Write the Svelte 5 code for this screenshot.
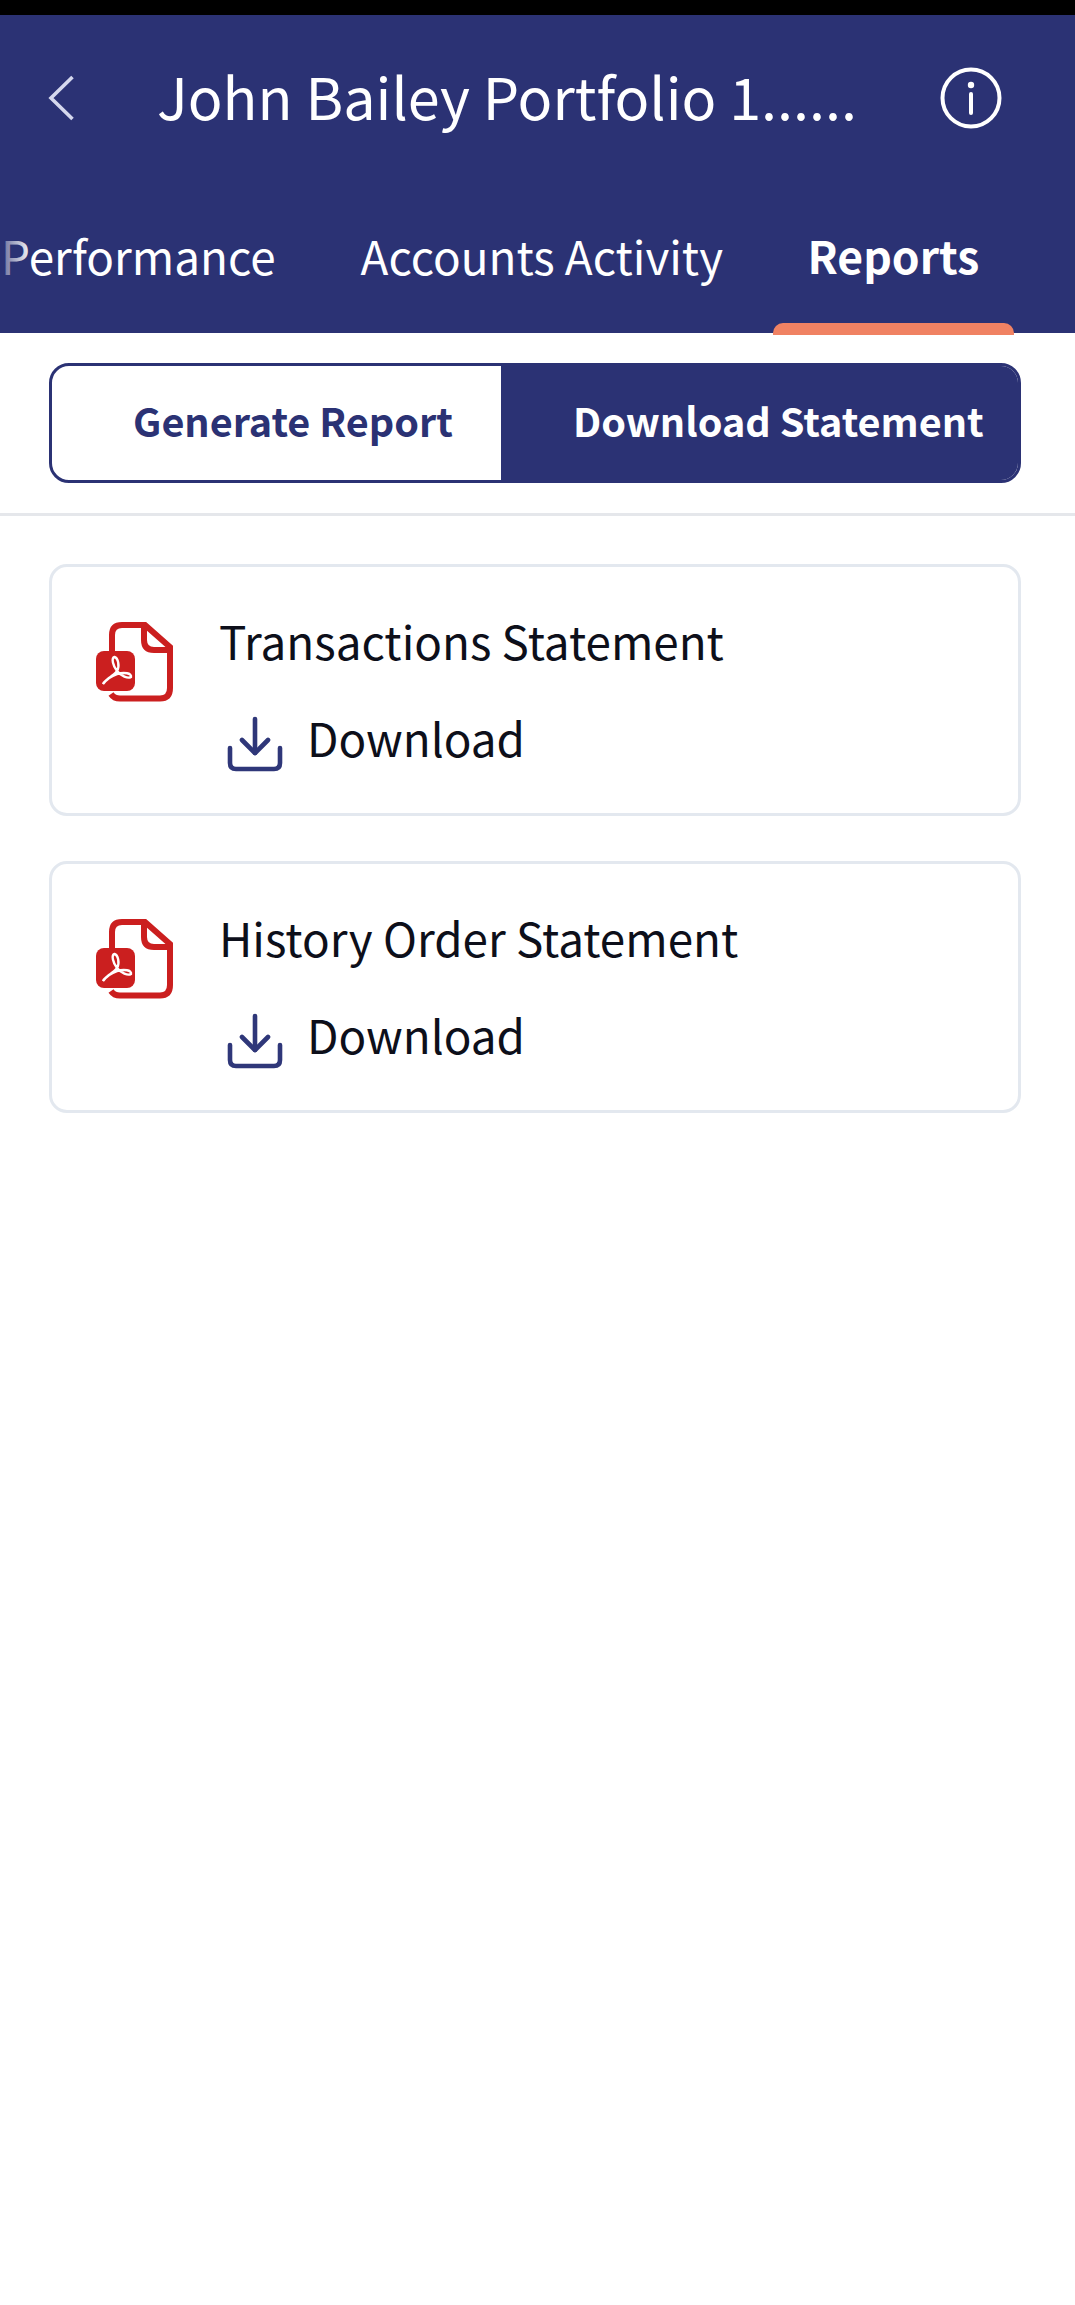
<script>
  const tabs = [
    { label: 'Performance', active: false },
    { label: 'Accounts Activity', active: false },
    { label: 'Reports', active: true },
  ];
  const statements = ['Transactions Statement', 'History Order Statement'];
</script>

<div class="screen">
  <div class="statusbar"></div>
  <header>
    <div class="topbar">
      <svg class="back" viewBox="0 0 30 50" width="30" height="50">
        <path d="M26.5 4 L5 25 L26.5 46" fill="none" stroke="#d5d8ee" stroke-width="3.6" />
      </svg>
      <h1>John Bailey Portfolio 1......</h1>
      <svg class="info" viewBox="0 0 62 62" width="62" height="62">
        <circle cx="31" cy="31" r="28.5" fill="none" stroke="#fff" stroke-width="4" />
        <circle cx="31" cy="18" r="3.2" fill="#fff" />
        <path d="M31 27 V46" stroke="#fff" stroke-width="4" stroke-linecap="round" />
      </svg>
    </div>
    <nav class="tabs">
      {#each tabs as tab}
        <div class="tab" class:active={tab.active}>{tab.label}</div>
      {/each}
      <div class="fade"></div>
    </nav>
  </header>

  <div class="toggle-row">
    <div class="toggle">
      <div class="seg">Generate Report</div>
      <div class="seg on">Download Statement</div>
    </div>
  </div>

  <div class="list">
    {#each statements as name}
      <div class="card">
        <svg class="pdf" viewBox="0 0 77 80" width="77" height="80">
          <path d="M16 30 V13 Q16 3 26 3 H49 L74 25 V66 Q74 76.5 64 76.5 H24 Q18 76.5 15 72" fill="none" stroke="#cb1f1f" stroke-width="6" />
          <path d="M48 3 V18 Q48 28 58 28 H74" fill="none" stroke="#cb1f1f" stroke-width="6" />
          <rect x="0" y="29" width="39" height="40" rx="8" fill="#cb1f1f" />
          <path d="M7 62 C9 57 17 55 21 49 C24 44 22 36 18.5 35 C15 36 17 44 21 49 C25 54 32 57 35 55 C36 51 28 50 21 52 C15 54 10 58 7 62 Z" fill="none" stroke="#fff" stroke-width="2.4" />
        </svg>
        <div class="body">
          <div class="name">{name}</div>
          <div class="dl">
            <svg viewBox="0 0 56 56" width="56" height="56">
              <g fill="none" stroke="#2f3779" stroke-width="4.6" stroke-linecap="round" stroke-linejoin="round">
                <path d="M28 3 V37" />
                <path d="M15 24 L28 37 L41 24" />
                <path d="M3 32 V47 Q3 53 9 53 H47 Q53 53 53 47 V32" />
              </g>
            </svg>
            <span>Download</span>
          </div>
        </div>
      </div>
    {/each}
  </div>
</div>

<style>
  :global(body) {
    margin: 0;
    background: #fff;
  }

  .screen {
    width: 1075px;
    height: 2305px;
    overflow: hidden;
    font-family: 'Noto Sans CJK SC', 'Noto Sans', sans-serif;
    background: #fff;
  }

  .statusbar {
    height: 15px;
    background: #000;
  }

  header {
    height: 318px;
    background: #2b3274;
    color: #fff;
  }

  .topbar {
    display: flex;
    align-items: center;
    height: 166px;
    padding-left: 46px;
  }

  .back,
  .info {
    flex: none;
  }

  h1 {
    margin: -5px 0 0 81px;
    width: 783px;
    font-size: 57.5px;
    font-weight: 400;
    line-height: 1.2;
    white-space: nowrap;
  }

  .tabs {
    position: relative;
    display: flex;
    gap: 15px;
    height: 152px;
    margin-left: -34px;
  }

  .tab {
    position: relative;
    padding: 39px 35px 0;
    font-size: 45.8px;
    line-height: 70px;
    white-space: nowrap;
  }

  .tab.active {
    padding: 39px 34.5px 0;
    font-size: 44.5px;
    font-weight: 700;
  }

  .tab.active::after {
    content: '';
    position: absolute;
    left: 0;
    right: 0;
    bottom: -2px;
    height: 12px;
    background: #f08263;
    border-radius: 10px 10px 0 0;
  }

  .fade {
    position: absolute;
    left: 34px;
    top: 39px;
    width: 32px;
    height: 70px;
    background: linear-gradient(to right, rgba(43, 50, 116, 0.75), rgba(43, 50, 116, 0));
  }

  .toggle-row {
    padding: 30px 54px 30px 49px;
    border-bottom: 3px solid #e5e7eb;
  }

  .toggle {
    display: flex;
    height: 120px;
    box-sizing: border-box;
    border: 3px solid #2b3274;
    border-radius: 20px;
    overflow: hidden;
  }

  .seg {
    flex: none;
    width: 449px;
    padding-left: 81px;
    box-sizing: border-box;
    font-size: 39.6px;
    font-weight: 700;
    line-height: 108px;
    color: #2b3274;
    white-space: nowrap;
  }

  .seg.on {
    flex: 1;
    padding-left: 72px;
    background: #2b3274;
    color: #fff;
  }

  .list {
    display: flex;
    flex-direction: column;
    gap: 45px;
    padding: 48px 54px 0 49px;
  }

  .card {
    display: flex;
    height: 252px;
    box-sizing: border-box;
    border: 3px solid #e3e8ef;
    border-radius: 18px;
    padding: 55px 0 0 44px;
  }

  .pdf {
    flex: none;
  }

  .body {
    margin-left: 46px;
    margin-top: -17px;
  }

  .name {
    font-size: 45.8px;
    line-height: 70px;
    color: #0d0f1a;
    white-space: nowrap;
  }

  .dl {
    display: flex;
    align-items: center;
    margin-top: 27px;
    font-size: 45.8px;
    line-height: 70px;
    color: #0d0f1a;
  }

  .dl svg {
    margin: 14px 24px 0 8px;
  }
</style>
